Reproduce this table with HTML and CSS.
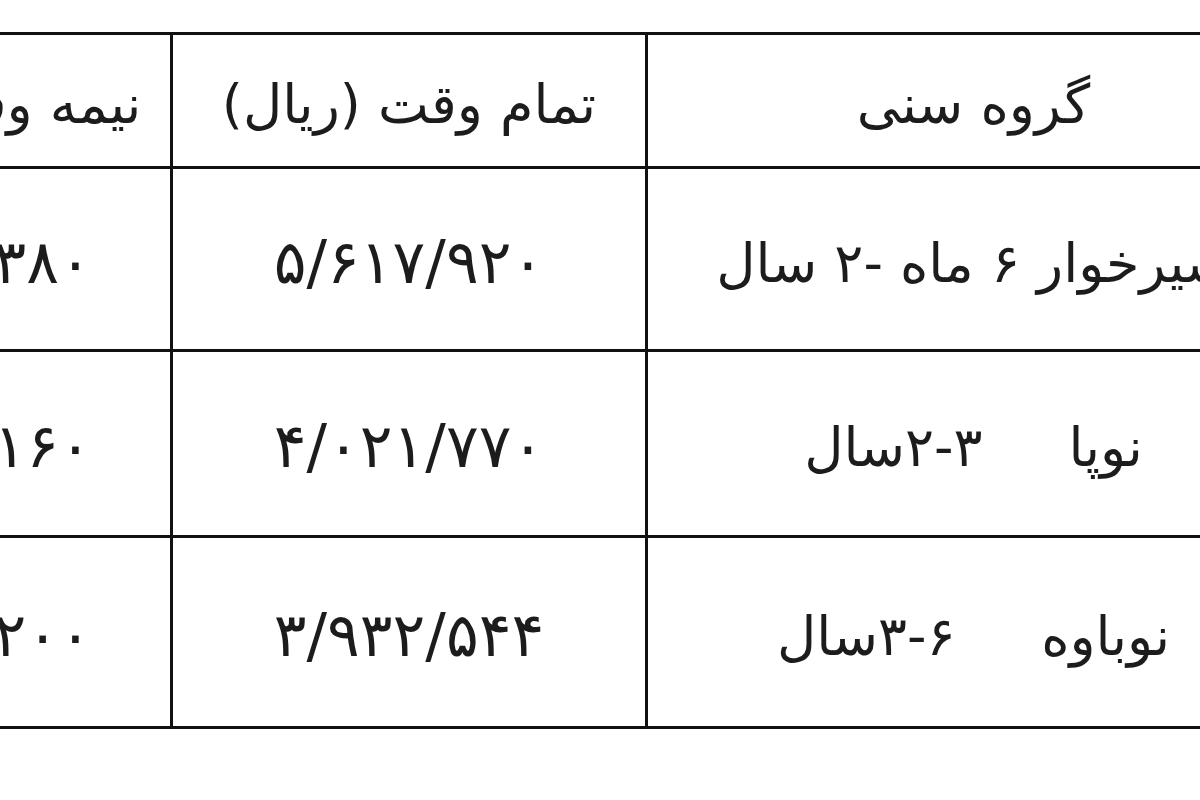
FILE: index.html
```html
<!DOCTYPE html>
<html lang="fa">
<head>
<meta charset="utf-8">
<title>شهریه مهدکودک</title>
<link rel="stylesheet" href="styles.css">
</head>
<body>
<div class="frame">
  <table class="fees" dir="rtl">
    <colgroup>
      <col class="c-group">
      <col class="c-full">
      <col class="c-half">
    </colgroup>
    <tr class="r-head">
      <th>گروه سنی</th>
      <th>تمام وقت (ریال)</th>
      <th>نیمه وقت (ریال)</th>
    </tr>
    <tr class="r-1">
      <td>شیرخوار ۶ ماه -۲ سال</td>
      <td class="num">۵/۶۱۷/۹۲۰</td>
      <td class="num">۳/۹۳۲/۳۸۰</td>
    </tr>
    <tr class="r-2">
      <td class="pre">نوپا     ۳-۲سال</td>
      <td class="num">۴/۰۲۱/۷۷۰</td>
      <td class="num">۲/۸۱۵/۱۶۰</td>
    </tr>
    <tr class="r-3">
      <td class="pre">نوباوه     ۶-۳سال</td>
      <td class="num">۳/۹۳۲/۵۴۴</td>
      <td class="num">۲/۷۵۳/۲۰۰</td>
    </tr>
  </table>
</div>
</body>
</html>
```

FILE: styles.css
```css
html, body {
  margin: 0;
  padding: 0;
  background: #ffffff;
}

body {
  width: 1200px;
  height: 800px;
  overflow: hidden;
  font-family: "DejaVu Sans", "Liberation Sans", sans-serif;
  color: #1c1c1c;
}

.frame {
  padding-top: 32px;
  width: 1200px;
  overflow: hidden;
}

.fees {
  border-collapse: collapse;
  table-layout: fixed;
  width: 1559px;
  margin-left: -260px;
  font-size: 54px;
}

.c-group { width: 654px; }
.c-full  { width: 475px; }
.c-half  { width: 430px; }

.fees th,
.fees td {
  border: 3px solid #111111;
  text-align: center;
  vertical-align: middle;
  font-weight: normal;
  padding: 8px 0 0 0;
  white-space: nowrap;
  overflow: hidden;
}

.fees .num {
  font-size: 61px;
  padding-top: 4px;
}

.fees .pre {
  white-space: pre;
}

.r-head { height: 134px; }
.r-1 { height: 183px; }
.r-2 { height: 186px; }
.r-3 { height: 191px; }
```
